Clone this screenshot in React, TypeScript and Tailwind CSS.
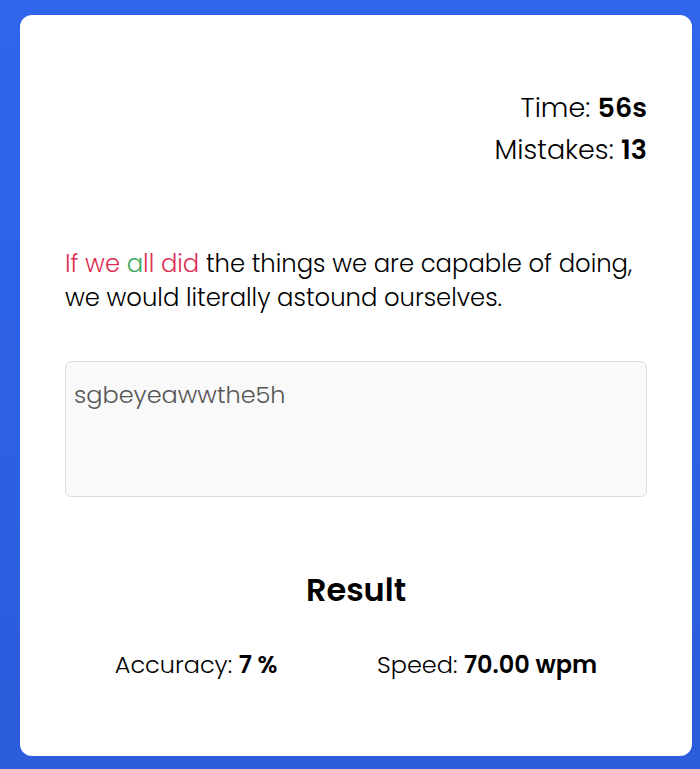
export default function App() {
  return (
    <div className="min-h-screen bg-gradient-to-b from-[#3065ec] to-[#2a5cdb] pt-[15px] pl-[20px] pb-[13px] font-['Poppins','Open_Sans',sans-serif] text-black">
      <div className="w-[672px] h-[741px] bg-white rounded-[12px] px-[45px] pt-[72px]">
        <div className="flex flex-col items-end text-[27px] leading-[42px] font-light">
          <p>
            Time: <span className="font-semibold">56s</span>
          </p>
          <p>
            Mistakes: <span className="font-semibold">13</span>
          </p>
        </div>

        <p className="mt-[76px] text-[24.3px] leading-[34px] font-light">
          <span className="text-[#dc2f55]">If we </span>
          <span className="text-[#3fa85f]">a</span>
          <span className="text-[#dc2f55]">ll did</span> the things we are
          capable of doing, we would literally astound ourselves.
        </p>

        <div className="mt-[46px] h-[136px] rounded-[6px] border border-[#dddddd] bg-[#f9f9f9] px-[8px] pt-[18px] text-[24px] leading-[30px] font-light text-[#555555]">
          sgbeyeawwthe5h
        </div>

        <h2 className="mt-[71px] text-center text-[32px] leading-[44px] font-semibold">
          Result
        </h2>

        <div className="mt-[38px] flex justify-around text-[24px] leading-[30px] font-light">
          <p>
            Accuracy: <span className="font-semibold">7 %</span>
          </p>
          <p>
            Speed: <span className="font-semibold">70.00 wpm</span>
          </p>
        </div>
      </div>
    </div>
  );
}
